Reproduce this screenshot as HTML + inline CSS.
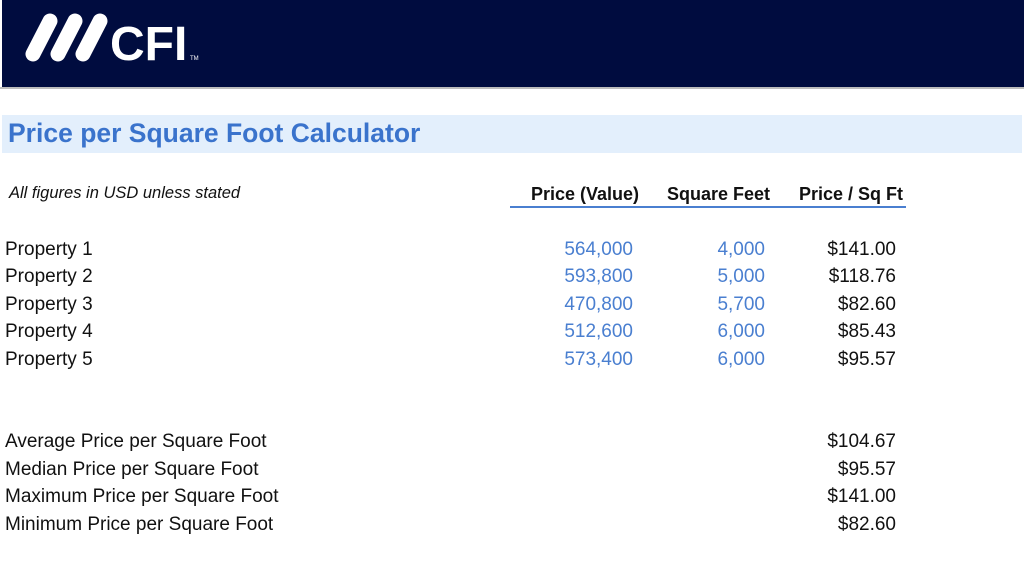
<!DOCTYPE html>
<html><head><style>
body{margin:0;width:1024px;height:567px;background:#fff;position:relative;overflow:hidden;font-family:"Liberation Sans",sans-serif;}
.hdr{position:absolute;left:2px;top:0;width:1022px;height:87px;background:#000c3f;}
.hl{position:absolute;left:0;top:87px;width:1024px;height:2px;background:#bdbdbd;}
.band{position:absolute;left:2px;top:115px;width:1020px;height:38px;background:#e3effc;}
.t{position:absolute;white-space:nowrap;line-height:1;}
.title{left:8px;top:120px;font-size:26.5px;font-weight:bold;color:#3a73cc;}
.r{text-align:right;}
.row{font-size:19px;color:#111;}
.row.b{color:#4a7fd0;}
.h{font-size:18px;font-weight:bold;color:#111;top:185px;}
</style></head><body>
<div class="hdr">
<svg width="200" height="87" viewBox="0 0 200 87" style="position:absolute;left:0;top:0">
<g stroke="#fff" stroke-width="15" stroke-linecap="round">
<line x1="31" y1="54" x2="48" y2="21"/>
<line x1="56" y1="54" x2="73" y2="21"/>
<line x1="81" y1="54" x2="98" y2="21"/>
</g>
<text x="108" y="60" fill="#fff" font-family="Liberation Sans" font-weight="bold" font-size="48">CFI</text>
<text x="188" y="60" fill="#fff" font-family="Liberation Sans" font-size="6">TM</text>
</svg>
</div>
<div class="hl"></div>
<div class="band"></div>
<div class="t title">Price per Square Foot Calculator</div>
<div class="t" style="left:9px;top:185px;font-size:16.5px;font-style:italic;color:#111">All figures in USD unless stated</div>
<div class="t h r" style="right:385px">Price (Value)</div>
<div class="t h r" style="right:254px">Square Feet</div>
<div class="t h r" style="right:121px">Price / Sq Ft</div>
<div style="position:absolute;left:510px;top:206px;width:396px;height:2px;background:#4a7fd0"></div>

<div class="t row" style="left:5px;top:240px">Property 1</div>
<div class="t row" style="left:5px;top:267px">Property 2</div>
<div class="t row" style="left:5px;top:295px">Property 3</div>
<div class="t row" style="left:5px;top:322px">Property 4</div>
<div class="t row" style="left:5px;top:350px">Property 5</div>

<div class="t row b r" style="right:391px;top:240px">564,000</div>
<div class="t row b r" style="right:391px;top:267px">593,800</div>
<div class="t row b r" style="right:391px;top:295px">470,800</div>
<div class="t row b r" style="right:391px;top:322px">512,600</div>
<div class="t row b r" style="right:391px;top:350px">573,400</div>

<div class="t row b r" style="right:259px;top:240px">4,000</div>
<div class="t row b r" style="right:259px;top:267px">5,000</div>
<div class="t row b r" style="right:259px;top:295px">5,700</div>
<div class="t row b r" style="right:259px;top:322px">6,000</div>
<div class="t row b r" style="right:259px;top:350px">6,000</div>

<div class="t row r" style="right:128px;top:240px">$141.00</div>
<div class="t row r" style="right:128px;top:267px">$118.76</div>
<div class="t row r" style="right:128px;top:295px">$82.60</div>
<div class="t row r" style="right:128px;top:322px">$85.43</div>
<div class="t row r" style="right:128px;top:350px">$95.57</div>

<div class="t row" style="left:5px;top:432px">Average Price per Square Foot</div>
<div class="t row" style="left:5px;top:460px">Median Price per Square Foot</div>
<div class="t row" style="left:5px;top:487px">Maximum Price per Square Foot</div>
<div class="t row" style="left:5px;top:515px">Minimum Price per Square Foot</div>
<div class="t row r" style="right:128px;top:432px">$104.67</div>
<div class="t row r" style="right:128px;top:460px">$95.57</div>
<div class="t row r" style="right:128px;top:487px">$141.00</div>
<div class="t row r" style="right:128px;top:515px">$82.60</div>
</body></html>
